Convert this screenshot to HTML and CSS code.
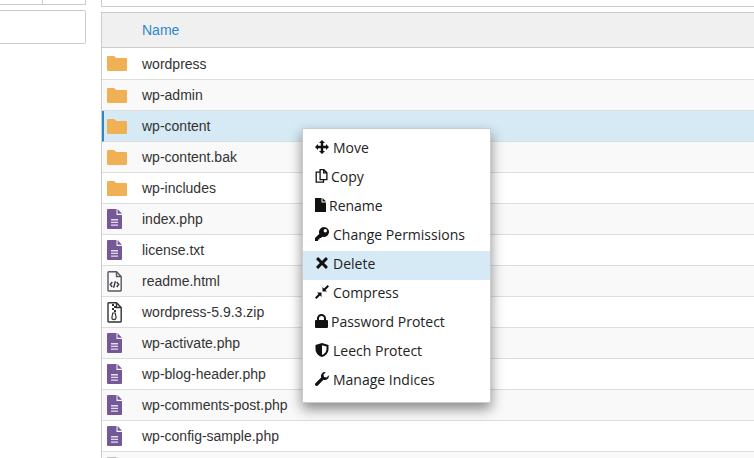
FILE: index.html
```html
<!DOCTYPE html>
<html lang="en">
<head>
  <meta charset="UTF-8">
  <title>File Manager</title>
  <link rel="stylesheet" href="styles.css">
</head>
<body>
  <svg class="sprites" width="0" height="0">
    <symbol id="folder" viewBox="0 0 20 15"><path d="M1 0h6l2.500 2H19a1 1 0 0 1 1 1v11a1 1 0 0 1-1 1H1a1 1 0 0 1-1-1V1a1 1 0 0 1 1-1z"/></symbol>
    <symbol id="doc" viewBox="0 0 15 20"><path d="M0 1a1 1 0 0 1 1-1h8.500v6H15v13a1 1 0 0 1-1 1H1a1 1 0 0 1-1-1z"/><path d="M10.500 0L15 4.800h-4.500z"/><path class="doc-lines" d="M4 10h7v1.400H4zM4 12.700h7v1.400H4zM4 15.400h7v1.400H4z"/></symbol>
  </svg>

  <aside class="side">
    <div class="side-top"><span></span><span></span></div>
    <div class="side-box"></div>
  </aside>

  <main class="files">
    <div class="top-bar"></div>
    <div class="table">
      <div class="head"><span class="col-name">Name</span></div>
      <div class="row"><svg class="ico folder"><use href="#folder"/></svg><span>wordpress</span></div>
      <div class="row"><svg class="ico folder"><use href="#folder"/></svg><span>wp-admin</span></div>
      <div class="row selected"><svg class="ico folder"><use href="#folder"/></svg><span>wp-content</span></div>
      <div class="row"><svg class="ico folder"><use href="#folder"/></svg><span>wp-content.bak</span></div>
      <div class="row"><svg class="ico folder"><use href="#folder"/></svg><span>wp-includes</span></div>
      <div class="row"><svg class="ico doc"><use href="#doc"/></svg><span>index.php</span></div>
      <div class="row"><svg class="ico doc"><use href="#doc"/></svg><span>license.txt</span></div>
      <div class="row">
        <svg class="ico outline" viewBox="0 0 15 21"><path d="M1 1.500a.7.7 0 0 1 .7-.7H9.500l4.700 4.700v13.800a.7.7 0 0 1-.7.7H1.700a.7.7 0 0 1-.7-.7zM9.500 1v4.500h4.500" fill="none" stroke="#5a5560" stroke-width="1.400"/><path d="M5.300 11l-2 2.500 2 2.500M9.700 11l2 2.500-2 2.500M8.400 10.300l-1.800 6.500" fill="none" stroke="#3f3a48" stroke-width="1.400"/></svg>
        <span>readme.html</span>
      </div>
      <div class="row">
        <svg class="ico outline" viewBox="0 0 15 21"><path d="M1 1.500a.7.7 0 0 1 .7-.7H9.500l4.700 4.700v13.800a.7.7 0 0 1-.7.7H1.700a.7.7 0 0 1-.7-.7zM9.500 1v4.500h4.500" fill="none" stroke="#333" stroke-width="1.400"/><path d="M5 2h2v2H5zM7 4h2v2H7zM5 6h2v2H5zM7 8h2v2H7z" fill="#333"/><path d="M5.800 11h2.400l.9 4.500a2 2 0 1 1-4.200 0z" fill="none" stroke="#333" stroke-width="1.200"/></svg>
        <span>wordpress-5.9.3.zip</span>
      </div>
      <div class="row"><svg class="ico doc"><use href="#doc"/></svg><span>wp-activate.php</span></div>
      <div class="row"><svg class="ico doc"><use href="#doc"/></svg><span>wp-blog-header.php</span></div>
      <div class="row"><svg class="ico doc"><use href="#doc"/></svg><span>wp-comments-post.php</span></div>
      <div class="row"><svg class="ico doc"><use href="#doc"/></svg><span>wp-config-sample.php</span></div>
      <div class="row"><svg class="ico doc faded"><use href="#doc"/></svg><span></span></div>
    </div>
  </main>

  <ul class="menu">
    <li><svg class="mi" viewBox="0 0 14 14"><path d="M7 0l3 3H8.200v2.800H11V4l3 3-3 3V8.200H8.200V11H10l-3 3-3-3h1.800V8.200H3V10L0 7l3-3v1.800h2.800V3H4z"/></svg>Move</li>
    <li><svg class="mi narrow line" viewBox="0 0 12 14"><path d="M4.600.7h3.800l3 3v7h-6.800zM8.200.7v3.200h3.200M4.600 3.200H.7v10h7.300v-2.500"/></svg>Copy</li>
    <li><svg class="mi thin" viewBox="0 0 11 14"><path d="M0 0h6.500v4.500H11V14H0zM7.500 0L11 3.500H7.500z"/></svg>Rename</li>
    <li><svg class="mi" viewBox="0 0 14 14"><path fill-rule="evenodd" d="M9 0a5 5 0 1 1-1.700 9.700L6 11H4.500v1.500H3V14H0v-3l4.300-4.300A5 5 0 0 1 9 0zM10.300 2a1.700 1.700 0 1 0 0 3.400 1.700 1.700 0 0 0 0-3.400z"/></svg>Change Permissions</li>
    <li class="active"><svg class="mi" viewBox="-1 -1 16 16"><path d="M3.200.8L7 4.600 10.800.8a1 1 0 0 1 1.400 0l1 1a1 1 0 0 1 0 1.400L9.400 7l3.800 3.800a1 1 0 0 1 0 1.400l-1 1a1 1 0 0 1-1.400 0L7 9.400l-3.800 3.800a1 1 0 0 1-1.400 0l-1-1a1 1 0 0 1 0-1.400L4.600 7 .8 3.200a1 1 0 0 1 0-1.400l1-1a1 1 0 0 1 1.400 0z"/></svg>Delete</li>
    <li><svg class="mi" viewBox="0 0 14 14"><path d="M7.500 2v4.500H12l-1.500-1.500L14 1.400 12.600 0 9 3.500zM6.500 12V7.500H2L3.500 9 0 12.600 1.400 14 5 10.500z"/></svg>Compress</li>
    <li><svg class="mi narrow" viewBox="0 0 13 14"><path fill-rule="evenodd" d="M6.500 0A4.500 4.500 0 0 1 11 4.500V6h1a1 1 0 0 1 1 1v6a1 1 0 0 1-1 1H1a1 1 0 0 1-1-1V7a1 1 0 0 1 1-1h1V4.500A4.500 4.500 0 0 1 6.500 0zM6.500 2A2.500 2.500 0 0 0 4 4.500V6h5V4.500A2.500 2.500 0 0 0 6.500 2z"/></svg>Password Protect</li>
    <li><svg class="mi" viewBox="0 0 13 14"><path fill-rule="evenodd" d="M6.500 0L13 2v4c0 4-3 7-6.500 8C3 13 0 10 0 6V2zM6.500 2.200v9.700c2.500-.9 4.500-3.100 4.500-5.900V3.500z"/></svg>Leech Protect</li>
    <li><svg class="mi" viewBox="0 0 14 14"><path fill-rule="evenodd" d="M13.800 3.200a4 4 0 0 1-5.300 4.600l-5.700 5.700a1.500 1.500 0 0 1-2.300-2.300l5.700-5.700A4 4 0 0 1 10.800.2L8.500 2.500l.5 2.500 2.500.5z"/></svg>Manage Indices</li>
  </ul>
</body>
</html>
```

FILE: styles.css
```css
* {
  box-sizing: border-box;
}

body {
  margin: 0;
  display: flex;
  align-items: flex-start;
  height: 458px;
  overflow: hidden;
  background: #fff;
  font-family: "Liberation Sans", Arial, sans-serif;
  font-size: 14px;
  color: #333;
}

.sprites {
  position: absolute;
}

.side {
  width: 86px;
  flex: none;
  margin-right: 15px;
}

.side-top {
  display: flex;
  height: 5px;
  border: 1px solid #ccc;
  border-width: 0 1px 1px 0;
}

.side-top span {
  flex: 1;
}

.side-top span:first-child {
  border-right: 1px solid #ccc;
}

.side-box {
  height: 34px;
  margin-top: 5px;
  border: 1px solid #ccc;
  border-left: 0;
  border-radius: 0 2px 2px 0;
}

.files {
  flex: 1;
  height: 458px;
  overflow: hidden;
}

.top-bar {
  height: 7px;
  border: 1px solid #ccc;
  border-width: 0 0 1px 1px;
  margin-bottom: 5px;
}

.table {
  border-left: 1px solid #ccc;
  border-top: 1px solid #ccc;
}

.head {
  display: flex;
  align-items: center;
  height: 35px;
  padding-left: 40px;
  background: #f0f0f0;
  border-bottom: 1px solid #ccc;
  color: #2d87cb;
}

.row {
  display: flex;
  align-items: center;
  height: 31px;
  padding-left: 5px;
  border-bottom: 1px solid #ddd;
  background: #f9f9f9;
}

.head + .row {
  height: 32px;
}

.row:nth-child(even) {
  background: #fff;
}

.row.selected {
  background: #d5eaf5;
  border-left: 2px solid #2d87cb;
  padding-left: 3px;
}

.ico {
  flex: none;
  width: 20px;
  height: 20px;
  margin-right: 15px;
}

.folder {
  height: 15px;
  fill: #f0b155;
}

.doc {
  width: 15px;
  margin-right: 20px;
  fill: #75589a;
}

.doc-lines {
  fill: #e4deea;
}

.doc.faded {
  fill: #bbb;
}

.outline {
  width: 15px;
  height: 21px;
  margin-right: 20px;
}

.menu {
  position: absolute;
  left: 302px;
  top: 128px;
  width: 189px;
  height: 275px;
  margin: 0;
  padding: 6px 0;
  list-style: none;
  background: #fff;
  border: 1px solid #ccc;
  box-shadow: 0 6px 12px rgba(0, 0, 0, .45);
  font-family: "Open Sans", sans-serif;
  font-size: 14px;
  color: #222;
}

.menu li {
  display: flex;
  align-items: center;
  height: 29px;
  padding: 0 0 5px 12px;
}

.menu li.active {
  background: #d5eaf5;
}

.mi {
  flex: none;
  width: 14px;
  height: 14px;
  margin-right: 4px;
  fill: #111;
}

.mi.narrow {
  width: 13px;
  margin-right: 3px;
}

.mi.thin {
  width: 11px;
  margin-right: 3px;
}

.mi.line {
  fill: none;
  stroke: #111;
  stroke-width: 1.3;
}
```
